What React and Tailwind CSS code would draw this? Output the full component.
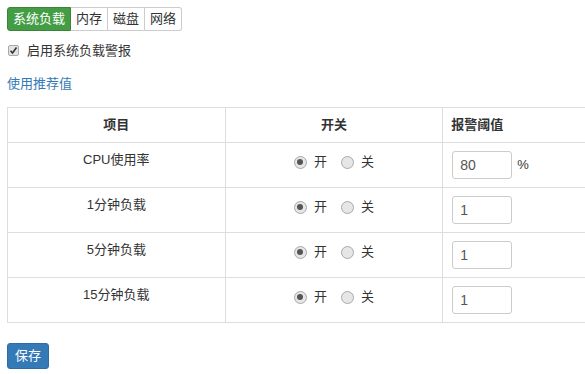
import React from 'react'

const rows = [
  { name: 'CPU使用率', value: '80', unit: '%' },
  { name: '1分钟负载', value: '1' },
  { name: '5分钟负载', value: '1' },
  { name: '15分钟负载', value: '1' },
]

const Radio = ({ checked, className = '' }) => (
  <span className={'flex h-[13px] w-[13px] items-center justify-center rounded-full border border-[#a9a9a9] bg-[#e6e6e6] ' + className}>
    {checked && <span className="h-[6px] w-[6px] rounded-full bg-[#555]" />}
  </span>
)

const App = () => {
  return (
    <div
      className="h-[374px] w-[585px] overflow-hidden bg-white p-[7px] text-[13px] text-[#333]"
      style={{ fontFamily: '"Liberation Sans", "Noto Sans CJK SC", sans-serif' }}
    >
      {/* Tabs */}
      <div className="flex h-[24px] text-[13px] leading-[22px]">
        <div className="rounded-l-[3px] border border-[#398439] bg-[#449d44] px-[5px] text-white">系统负载</div>
        <div className="border border-l-0 border-[#ccc] px-[5px]">内存</div>
        <div className="border border-l-0 border-[#ccc] px-[5px]">磁盘</div>
        <div className="rounded-r-[3px] border border-l-0 border-[#ccc] px-[5px]">网络</div>
      </div>

      {/* Checkbox */}
      <div className="mt-[10px] flex items-center gap-[8px] pl-[1px]">
        <span className="flex h-[11px] w-[11px] items-center justify-center rounded-[2px] border border-[#a9a9a9] bg-[#e3e3e3]">
          <svg width="9" height="9" viewBox="0 0 9 9">
            <path d="M1.5 4.8 L3.5 7 L7.5 1.5" fill="none" stroke="#333" strokeWidth="1.6" />
          </svg>
        </span>
        <span>启用系统负载警报</span>
      </div>

      <div className="mt-[13px] text-[#337ab7]">使用推荐值</div>

      {/* Table */}
      <table className="mt-[14px] w-[654px] border-collapse border border-[#ddd] leading-[18px]">
        <thead>
          <tr>
            <th className="w-[218px] border border-[#ddd] p-[8px] text-center font-bold">项目</th>
            <th className="w-[218px] border border-[#ddd] p-[8px] text-center font-bold">开关</th>
            <th className="w-[218px] border border-[#ddd] p-[8px] text-left font-bold">报警阈值</th>
          </tr>
        </thead>
        <tbody>
          {rows.map((row) => (
            <tr key={row.name}>
              <td className="border border-[#ddd] p-[8px] text-center align-top">{row.name}</td>
              <td className="border border-[#ddd] p-[8px] align-top">
                <div className="flex items-center justify-center pt-[2px]">
                  <Radio checked />
                  <span className="ml-[7px]">开</span>
                  <Radio className="ml-[14px]" />
                  <span className="ml-[7px]">关</span>
                </div>
              </td>
              <td className="border border-[#ddd] p-[8px] align-top">
                <div className="flex items-center">
                  <div className="ml-[1px] flex h-[28px] w-[60px] items-center rounded-[3px] border border-[#ccc] px-[7px] text-[14px] text-[#555]">
                    {row.value}
                  </div>
                  {row.unit && <span className="ml-[5px]">{row.unit}</span>}
                </div>
              </td>
            </tr>
          ))}
        </tbody>
      </table>

      <button className="mt-[20px] block h-[26px] rounded-[3px] border border-[#2e6da4] bg-[#337ab7] px-[7px] text-[13px] text-white">
        保存
      </button>
    </div>
  )
}

export default App
